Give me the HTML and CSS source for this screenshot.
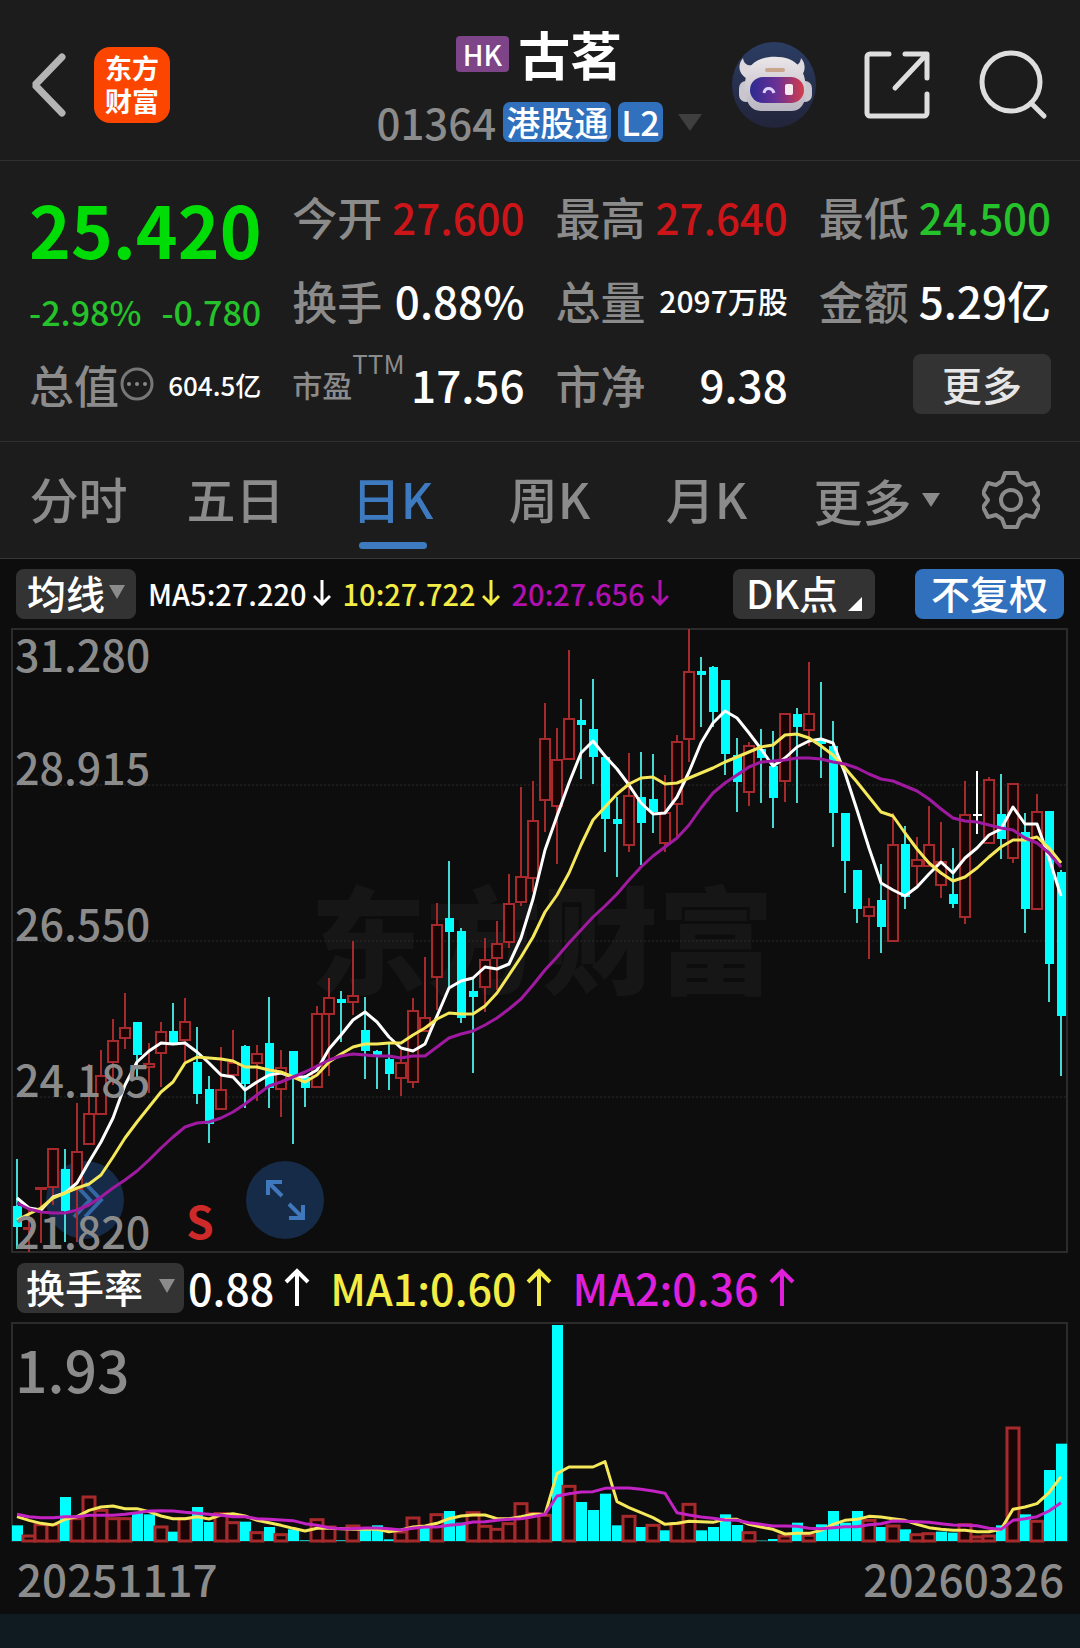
FILE: index.html
```html
<!DOCTYPE html>
<html lang="zh-CN">
<head>
<meta charset="utf-8">
<meta name="viewport" content="width=device-width, initial-scale=1">
<title>古茗 01364</title>
<link rel="stylesheet" href="styles.css">
</head>
<body>
<header class="topbar">
  <div class="topbar-left">
    <button class="icon-btn" aria-label="返回"><svg width="36" height="64" viewBox="0 0 36 64"><path d="M32 4 5 32l27 28" fill="none" stroke="#b4b4b4" stroke-width="7" stroke-linecap="round" stroke-linejoin="bevel"/></svg></button>
    <a class="logo" href="#">东方<br>财富</a>
  </div>
  <div class="title">
    <h1 class="name"><span class="hk">HK</span>古茗</h1>
    <button class="code"><span class="code-num">01364</span><span class="tag">港股通</span><span class="tag">L2</span><svg class="code-arrow" width="24" height="17" viewBox="0 0 24 17"><path d="M0 0h24L12 17z" fill="#3f3f3f"/></svg></button>
  </div>
  <div class="topbar-right">
    <button class="icon-btn" aria-label="智能助手">
      <svg width="84" height="86" viewBox="0 0 84 86">
        <defs>
          <linearGradient id="sky" x1="0" y1="0" x2="0" y2="1"><stop offset="0" stop-color="#2b3d63"/><stop offset="1" stop-color="#22243a"/></linearGradient>
          <linearGradient id="visor" x1="0" y1="0" x2="1" y2="0"><stop offset="0" stop-color="#2c2b92"/><stop offset=".5" stop-color="#6b3196"/><stop offset="1" stop-color="#d43c4a"/></linearGradient>
          <linearGradient id="shell" x1="0" y1="0" x2="0" y2="1"><stop offset="0" stop-color="#eae6e8"/><stop offset="1" stop-color="#b9b5c2"/></linearGradient>
        </defs>
        <ellipse cx="42" cy="43" rx="42" ry="43" fill="url(#sky)"/>
        <path d="M11 16c-6 7-4 16 3 20l11-14c-8 3-13 1-14-6zM69 16c6 7 4 16-2 20L56 22c8 3 12 1 13-6z" fill="#dcd8dd"/>
        <rect x="7" y="39" width="14" height="21" rx="7" fill="#c9c6d0"/><rect x="66" y="39" width="14" height="21" rx="7" fill="#c9c6d0"/>
        <path d="M13 44c0-15 6-24 16-27 8-3 20-3 28 0 10 4 16 13 17 28 1 17-6 24-15 24H29c-10 0-16-8-16-25z" fill="url(#shell)"/>
        <rect x="33" y="26" width="20" height="4" rx="2" fill="#c9a58e"/>
        <rect x="18" y="35" width="54" height="26" rx="13" fill="url(#visor)"/>
        <path d="M32 51c1-6 8-6 10 0" fill="none" stroke="#dcd2ff" stroke-width="3"/>
        <rect x="53" y="42" width="8" height="11" rx="2" fill="#f6eaf0"/>
      </svg>
    </button>
    <button class="icon-btn" aria-label="分享"><svg width="68" height="70" viewBox="0 0 68 70"><path d="M26 4H7a3 3 0 0 0-3 3v56a3 3 0 0 0 3 3h54a3 3 0 0 0 3-3V44M42 4h22v24M62 6 32 38" fill="none" stroke="#dedede" stroke-width="5" stroke-linecap="round" stroke-linejoin="round"/></svg></button>
    <button class="icon-btn" aria-label="搜索"><svg width="70" height="70" viewBox="0 0 70 70"><circle cx="33" cy="32" r="29" fill="none" stroke="#dedede" stroke-width="5"/><path d="m53 53 13 13" stroke="#dedede" stroke-width="5" stroke-linecap="round"/></svg></button>
  </div>
</header>

<section class="quote">
  <div class="price-box">
    <strong class="price">25.420</strong>
    <div class="change"><span>-2.98%</span><span>-0.780</span></div>
  </div>
  <div class="stat"><span class="label">今开</span><span class="value up">27.600</span></div>
  <div class="stat"><span class="label">最高</span><span class="value up">27.640</span></div>
  <div class="stat"><span class="label">最低</span><span class="value down">24.500</span></div>
  <div class="stat"><span class="label">换手</span><span class="value">0.88%</span></div>
  <div class="stat"><span class="label">总量</span><span class="value mid">2097万股</span></div>
  <div class="stat"><span class="label">金额</span><span class="value">5.29亿</span></div>
  <div class="stat"><span class="label with-icon">总值<svg width="34" height="36" viewBox="0 0 34 36"><circle cx="17" cy="18" r="15" fill="none" stroke="#777" stroke-width="3"/><circle cx="9" cy="18" r="2" fill="#888"/><circle cx="17" cy="18" r="2" fill="#888"/><circle cx="25" cy="18" r="2" fill="#888"/></svg></span><span class="value small">604.5亿</span></div>
  <div class="stat"><span class="label pe">市盈<sup>TTM</sup></span><span class="value">17.56</span></div>
  <div class="stat"><span class="label">市净</span><span class="value">9.38</span></div>
  <div class="stat stat-end"><button class="more">更多</button></div>
</section>

<nav class="tabs">
  <a href="#">分时</a>
  <a href="#">五日</a>
  <a href="#" class="active">日K</a>
  <a href="#">周K</a>
  <a href="#">月K</a>
  <a href="#" class="has-arrow">更多<svg width="18" height="14" viewBox="0 0 18 14"><path d="M0 0h18L9 14z" fill="#8b8b8b"/></svg></a>
  <button class="icon-btn" aria-label="设置"><svg width="58" height="60" viewBox="0 0 58 60"><path d="M23 3h12l3 8 6 4 8-2 5 10-5 7 5 7-5 10-8-2-6 4-3 8H23l-3-8-6-4-8 2-5-10 5-7-5-7 5-10 8 2 6-4z" fill="none" stroke="#8b8b8b" stroke-width="4" stroke-linejoin="round"/><circle cx="29" cy="30" r="10" fill="none" stroke="#8b8b8b" stroke-width="4"/></svg></button>
</nav>

<main class="charts">
  <div class="bar bar-main">
    <button class="chip">均线<svg width="16" height="14" viewBox="0 0 16 14"><path d="M0 0h16L8 14z" fill="#8b8b8b"/></svg></button>
    <div class="ma">
      <span class="white">MA5:27.220<svg width="18" height="26" viewBox="0 0 18 26"><path d="M9 0v24M1 16l8 8 8-8"/></svg></span>
      <span class="yellow">10:27.722<svg width="18" height="26" viewBox="0 0 18 26"><path d="M9 0v24M1 16l8 8 8-8"/></svg></span>
      <span class="purple">20:27.656<svg width="18" height="26" viewBox="0 0 18 26"><path d="M9 0v24M1 16l8 8 8-8"/></svg></span>
    </div>
    <button class="chip dk">DK点<svg width="14" height="14" viewBox="0 0 14 14"><path d="M14 0v14H0z" fill="#fff"/></svg></button>
    <button class="chip blue">不复权</button>
  </div>

  <div class="plot plot-price">
    <svg id="price" viewBox="0 0 1056 624" role="img" aria-label="日K线图"></svg>
    <div class="plot-tools">
      <button class="round" aria-label="快进"><svg width="78" height="78" viewBox="0 0 78 78"><path d="m28 22 16 17-16 17M39 22l16 17-16 17" fill="none" stroke="#3567a6" stroke-width="4"/></svg></button>
      <span class="signal">S</span>
      <button class="round" aria-label="全屏"><svg width="78" height="78" viewBox="0 0 78 78"><path d="M22 34V21h14M22 21l14 14M57 44v13H43M57 57 43 43" fill="none" stroke="#3f78bd" stroke-width="4"/></svg></button>
    </div>
  </div>

  <div class="bar bar-sub">
    <button class="chip wide">换手率<svg width="16" height="14" viewBox="0 0 16 14"><path d="M0 0h16L8 14z" fill="#8b8b8b"/></svg></button>
    <div class="turn">
      <span class="white">0.88<svg width="26" height="38" viewBox="0 0 26 38"><path d="M13 38V3M2 14 13 3l11 11"/></svg></span>
      <span class="yellow">MA1:0.60<svg width="26" height="38" viewBox="0 0 26 38"><path d="M13 38V3M2 14 13 3l11 11"/></svg></span>
      <span class="magenta">MA2:0.36<svg width="26" height="38" viewBox="0 0 26 38"><path d="M13 38V3M2 14 13 3l11 11"/></svg></span>
    </div>
  </div>

  <div class="plot"><svg id="turnover" viewBox="0 0 1056 219" role="img" aria-label="换手率"></svg></div>
  <div class="dates"><span>20251117</span><span>20260326</span></div>
</main>
<footer class="strip"></footer>
<script src="chart.js"></script>
</body>
</html>
```
FILE: styles.css
```css
* { box-sizing: border-box; }

body {
  margin: 0;
  background: #0d0d0d;
  color: #fff;
  font-family: "Noto Sans CJK SC", "Noto Sans", sans-serif;
  font-weight: 500;
}

button {
  border: 0;
  padding: 0;
  background: none;
  color: inherit;
  font: inherit;
  cursor: pointer;
}

a { color: inherit; text-decoration: none; }
svg { display: block; flex: none; }
.icon-btn { display: flex; align-items: center; justify-content: center; }

/* Top bar */
.topbar {
  display: grid;
  grid-template-columns: 1fr auto 1fr;
  align-items: center;
  padding: 10px 32px 0 30px;
  height: 161px;
  background: #1c1c1c;
  border-bottom: 1px solid #303030;
}
.topbar-left { display: flex; align-items: center; gap: 28px; }
.logo {
  width: 76px;
  height: 76px;
  padding-top: 4px;
  border-radius: 16px;
  background: #fc4600;
  font-size: 27px;
  font-weight: 700;
  line-height: 33px;
  text-align: center;
}
.title {
  display: flex;
  flex-direction: column;
  align-items: center;
  gap: 16px;
  padding-bottom: 6px;
}
.name {
  display: flex;
  align-items: center;
  gap: 9px;
  margin: 0;
  font-size: 52px;
  font-weight: 700;
  line-height: 64px;
}
.hk {
  padding: 0 7px;
  border-radius: 4px;
  background: #7d4488;
  font-size: 28px;
  font-weight: 500;
  line-height: 36px;
}
.code { display: flex; align-items: center; gap: 7px; line-height: 40px; }
.code-num { font-size: 42px; color: #8b8b8b; }
.tag {
  padding: 0 3px;
  border-radius: 7px;
  background: #3070bd;
  font-size: 34px;
}
.code-arrow { margin-left: 8px; }
.topbar-right { display: flex; align-items: center; justify-content: flex-end; gap: 47px; }

/* Quote */
.quote {
  display: grid;
  grid-template-columns: repeat(4, minmax(0, 1fr));
  grid-template-rows: 84px 84px 84px;
  column-gap: 31px;
  padding: 13px 29px 15px 29px;
  background: #1c1c1c;
  border-bottom: 1px solid #303030;
}
.price-box { grid-row: 1 / 3; padding-top: 8px; }
.price {
  display: block;
  color: #00dc05;
  font-size: 71px;
  line-height: 92px;
}
.change {
  display: flex;
  justify-content: space-between;
  color: #25c22b;
  font-size: 34px;
  line-height: 76px;
}
.stat { display: flex; align-items: center; justify-content: space-between; white-space: nowrap; }
.stat-end { justify-content: flex-end; }
.label { color: #8b8b8b; font-size: 45px; }
.with-icon { display: flex; align-items: center; gap: 1px; }
.pe { display: flex; align-items: center; font-size: 30px; }
.pe sup { align-self: flex-start; margin-top: -14px; font-size: 26px; line-height: 30px; font-weight: 400; }
.value { font-size: 44px; }
.up { color: #cb1519; font-size: 42px; }
.down { color: #25c22b; font-size: 42px; }
.mid { font-size: 30px; }
.small { font-size: 26px; }
.more {
  width: 138px;
  height: 60px;
  border-radius: 8px;
  background: #333;
  color: #e6e6e6;
  font-size: 40px;
  line-height: 56px;
}

/* Tabs */
.tabs {
  display: grid;
  grid-template-columns: repeat(6, 157fr) 138fr;
  height: 117px;
  background: #1c1c1c;
  border-bottom: 1px solid #383838;
  color: #8b8b8b;
  font-size: 49px;
  line-height: 112px;
  text-align: center;
}
.active { position: relative; color: #3e7abf; }
.active::after {
  content: "";
  position: absolute;
  left: 50%;
  bottom: 9px;
  width: 68px;
  height: 7px;
  margin-left: -34px;
  border-radius: 4px;
  background: #3e7abf;
}
.has-arrow { display: flex; align-items: center; justify-content: center; gap: 10px; padding-left: 26px; }

/* Indicator bars */
.charts { padding: 0 12px; }
.bar { display: flex; align-items: center; }
.bar-main { height: 70px; padding: 0 4px; }
.bar-sub { height: 70px; padding: 0 5px; gap: 4px; }
.chip {
  display: flex;
  align-items: center;
  justify-content: center;
  gap: 4px;
  width: 120px;
  height: 50px;
  padding-bottom: 4px;
  border-radius: 8px;
  background: #333;
  font-size: 39px;
}
.dk { width: 142px; margin-left: auto; gap: 10px; }
.dk svg { align-self: flex-end; margin-bottom: 4px; }
.blue { width: 149px; margin-left: 40px; background: #3070bd; }
.wide { width: 167px; gap: 16px; }
.ma, .turn { display: flex; padding-bottom: 3px; white-space: nowrap; }
.ma { gap: 12px; margin-left: 12px; font-size: 29px; }
.turn { gap: 20px; font-size: 43px; }
.ma span, .turn span { display: flex; align-items: center; }
.ma span { gap: 6px; }
.turn span { gap: 10px; }
.ma path { fill: none; stroke: currentColor; stroke-width: 3; }
.turn path { fill: none; stroke: currentColor; stroke-width: 4; }
.white { color: #fff; }
.yellow { color: #f3ec45; }
.purple { color: #b010b0; }
.magenta { color: #df1fd9; }

/* Plots */
.plot { position: relative; }
.plot > svg { width: 100%; height: auto; overflow: visible; }
.plot-price > svg { position: relative; z-index: 1; pointer-events: none; }
.frame { fill: none; stroke: #2b2b2b; stroke-width: 2; }
.grid { stroke: #2a2a2a; stroke-width: 1; stroke-dasharray: 2 2; }
.rise { fill: #190505; stroke: #a62a2c; stroke-width: 2; }
.fall { fill: #00ffff; stroke: none; }
.wick-rise { stroke: #a62a2c; stroke-width: 2; }
.wick-fall { stroke: #45d9d3; stroke-width: 2; }
.flat { stroke: #fff; stroke-width: 2; }
.line { fill: none; stroke-width: 3; stroke-linejoin: round; }
.line-white { stroke: #fff; }
.line-yellow { stroke: #f5e85a; }
.line-purple { stroke: #9f1aa0; }
.line-magenta { stroke: #c423c4; }
.axis { fill: #8b8b8b; font-size: 43px; }
.axis-large { fill: #8b8b8b; font-size: 57px; }
.watermark { fill: #161616; font-size: 116px; font-weight: 900; }
#turnover .rise { stroke-width: 3; }
.plot-tools {
  position: absolute;
  left: 34px;
  bottom: 11px;
  display: flex;
  align-items: center;
}
.round { border-radius: 50%; background: #162b47; }
.signal { width: 122px; padding: 40px 0 0 30px; text-align: center; color: #cf2a2a; font-size: 44px; font-weight: 700; line-height: 44px; }

.dates {
  display: flex;
  justify-content: space-between;
  padding: 0 4px 0 5px;
  color: #8b8b8b;
  font-size: 44px;
  line-height: 72px;
}
.strip { height: 36px; background: #101b21; }
```
FILE: chart.js
```js
const NS = 'http://www.w3.org/2000/svg';
const STEP = 12;
const X0 = 5;

// Session records: direction (r rise, f fall, w flat), high, body top, body bottom, low.
const candles = `
f 1159 1206 1227 1249|r 1210 1227 1229 1252|r 1187 1187 1189 1243|r 1148 1148 1188 1205|f 1149 1169 1211 1242
r 1103 1151 1190 1242|r 1064 1113 1145 1145|r 1050 1075 1115 1115|r 1019 1040 1063 1085|r 993 1027 1039 1049
f 1022 1022 1055 1077|r 1043 1063 1068 1093|r 1022 1031 1054 1087|f 1003 1031 1043 1043|r 998 1021 1041 1063
f 1027 1062 1094 1104|f 1076 1089 1124 1143|r 1047 1089 1110 1110|r 1030 1062 1076 1076|f 1045 1046 1084 1108
r 1045 1053 1064 1101|f 997 1043 1088 1108|r 1050 1067 1090 1117|f 1051 1051 1077 1144|f 1075 1077 1088 1107
r 1006 1013 1088 1088|r 978 997 1015 1076|f 991 999 1003 1042|r 941 995 1003 1015|f 997 1030 1051 1079
f 1050 1051 1057 1089|f 1042 1059 1074 1090|r 1050 1062 1079 1096|r 998 1010 1083 1088|r 957 1017 1032 1032
r 903 924 978 1010|f 861 918 932 988|f 928 931 1018 1023|f 977 991 997 1073|r 938 959 988 1012
r 921 943 959 990|r 874 903 943 948|r 787 876 903 906|r 781 820 879 892|r 703 738 801 832
r 728 759 807 864|r 650 718 760 760|f 699 720 725 779|f 679 729 757 784|f 757 757 819 852
f 797 819 824 877|r 753 795 846 852|f 752 797 823 865|f 754 799 812 833|r 775 812 844 852
r 735 741 805 837|r 629 671 740 762|f 657 671 675 727|f 666 667 712 727|f 680 680 754 775
f 738 755 782 812|r 742 745 793 806|f 729 749 758 803|f 731 766 798 828|r 713 713 782 802
f 708 714 727 803|r 662 713 731 746|f 682 740 744 778|f 721 746 813 847|f 813 813 861 893
f 870 870 909 923|r 898 906 917 959|f 864 900 927 953|r 813 844 942 942|f 826 844 897 909
r 837 859 867 885|r 806 844 867 867|r 822 861 886 898|f 848 894 904 908|r 781 814 918 924
w 771 815 815 834|r 777 779 844 844|f 774 814 839 859|r 783 783 859 863|f 813 832 909 933
r 794 811 910 910|f 811 811 964 1002|f 870 872 1016 1076`
  .trim().split(/[|\n]/).map(row => {
    const [dir, ...n] = row.split(' ');
    return [dir, ...n.map(v => v - 629)];
  });

const ma5 = [1198,1208,1210,1197,1193,1183,1162,1142,1118,1085,1062,1051,1043,1044,1043,1052,1063,1075,1077,1090,1082,1075,1073,1077,1077,1070,1049,1035,1020,1012,1022,1037,1048,1051,1044,1016,988,981,978,967,969,964,938,899,850,816,783,753,741,756,769,785,803,814,813,797,772,743,723,711,718,733,749,766,758,747,741,739,743,773,810,848,883,890,896,887,874,862,873,858,848,835,829,807,824,824,858,896];
const ma10 = [1220,1214,1208,1198,1193,1188,1184,1175,1157,1138,1122,1107,1092,1082,1063,1057,1058,1059,1061,1067,1067,1070,1072,1077,1082,1075,1062,1054,1047,1044,1044,1043,1043,1035,1028,1019,1013,1014,1014,1006,993,975,957,937,912,895,873,845,820,807,794,784,778,777,784,783,778,773,768,762,757,752,747,745,735,734,738,746,755,768,782,797,812,816,833,849,863,873,881,877,868,857,847,840,840,837,848,863];
const ma20 = [1203,1209,1212,1213,1213,1210,1205,1197,1188,1180,1171,1160,1148,1137,1127,1123,1122,1118,1112,1104,1095,1086,1082,1077,1072,1066,1060,1056,1054,1055,1056,1056,1058,1056,1056,1047,1038,1034,1031,1025,1018,1009,999,985,970,957,943,930,917,906,894,880,867,856,847,838,825,808,793,783,775,767,762,761,760,758,758,759,762,764,768,774,779,781,786,791,799,809,818,821,822,825,828,830,838,843,853,867];

// Turnover bars, in thirds of a plot unit below the top edge.
const turnover = 'f823 r852 r818 r818 f738 r800 r735 r775 r800 r800 f785 f790 r825 f842 r800 f768 f813 r785 r812 f812 r842 f828 r848 f835 f868 r803 r825 f868 r822 f835 f823 f865 r840 r798 f828 r788 f780 f815 r782 r823 r832 r815 r755 r785 r790 f222 r703 f753 f777 f728 f823 r793 f828 r820 f838 r815 r757 f838 f828 f790 f822 r842 f869 f864 r852 f815 r850 f820 f780 f815 f780 r805 f828 r822 f835 r848 r845 f842 f845 r818 r855 r852 f823 r528 f790 r808 f657 f578'.split(' ');
const tma1 = [797,808,817,822,805,797,778,768,765,773,773,782,795,803,803,797,804,792,788,795,808,815,823,832,840,832,832,833,835,835,835,842,837,828,825,817,803,795,792,792,803,803,797,790,790,668,648,648,648,632,752,770,785,800,820,817,811,812,814,805,805,820,828,835,849,847,847,838,820,808,805,796,798,803,808,820,830,835,838,838,842,842,835,775,768,758,725,677];
const tma2 = [790,797,800,800,797,797,793,793,793,790,785,780,779,780,784,787,790,793,797,797,803,805,807,809,818,823,830,833,833,831,831,833,837,832,828,828,823,820,813,812,808,805,803,797,790,735,728,723,722,712,711,711,715,720,727,785,792,798,802,807,808,815,820,825,825,826,832,833,830,827,827,821,818,810,811,812,814,818,822,823,824,832,835,808,803,797,780,755];

function add(parent, tag, attrs, text) {
  const el = document.createElementNS(NS, tag);
  for (const key in attrs) el.setAttribute(key, attrs[key]);
  if (text) el.textContent = text;
  parent.appendChild(el);
}

function polyline(svg, values, cls, toY) {
  const points = values.map((v, i) => `${X0 + i * STEP},${toY(v)}`).join(' ');
  add(svg, 'polyline', { class: `line ${cls}`, points });
}

const price = document.getElementById('price');
add(price, 'text', { class: 'watermark', x: 298, y: 356 }, '东方财富');
add(price, 'rect', { class: 'frame', x: 0, y: 0, width: 1055, height: 623 });
for (const y of [156, 312, 468]) add(price, 'line', { class: 'grid', x1: 0, x2: 1055, y1: y, y2: y });

candles.forEach(([dir, high, top, bottom, low], i) => {
  const x = X0 + i * STEP;
  if (dir === 'w') {
    add(price, 'path', { class: 'flat', d: `M${x} ${high}V${low}M${x - 4} ${top}h9` });
  } else if (dir === 'f') {
    add(price, 'path', { class: 'wick-fall', d: `M${x} ${high}V${low}` });
    add(price, 'rect', { class: 'fall', x: x - 4, y: top, width: 9, height: bottom - top });
  } else {
    add(price, 'path', { class: 'wick-rise', d: `M${x} ${high}V${top}M${x} ${bottom}V${low}` });
    add(price, 'rect', { class: 'rise', x: x - 5, y: top + 1, width: 10, height: Math.max(bottom - top - 2, 1) });
  }
});
polyline(price, ma5, 'line-white', v => v - 629);
polyline(price, ma10, 'line-yellow', v => v - 629);
polyline(price, ma20, 'line-purple', v => v - 629);
[['31.280', 43], ['28.915', 156], ['26.550', 312], ['24.185', 468], ['21.820', 620]]
  .forEach(([label, y]) => add(price, 'text', { class: 'axis', x: 3, y }, label));

const volume = document.getElementById('turnover');
const volumeY = v => (v - 216) / 3;
add(volume, 'rect', { class: 'frame', x: 0, y: 0, width: 1055, height: 218 });
turnover.forEach((bar, i) => {
  const x = X0 + i * STEP;
  const y = volumeY(Number(bar.slice(1)));
  if (bar[0] === 'f') add(volume, 'rect', { class: 'fall', x: x - 5, y, width: 11, height: 218 - y });
  else add(volume, 'rect', { class: 'rise', x: x - 6, y: y + 1, width: 12, height: 217 - y });
});
polyline(volume, tma1, 'line-yellow', volumeY);
polyline(volume, tma2, 'line-magenta', volumeY);
add(volume, 'text', { class: 'axis-large', x: 3, y: 70 }, '1.93');
```
